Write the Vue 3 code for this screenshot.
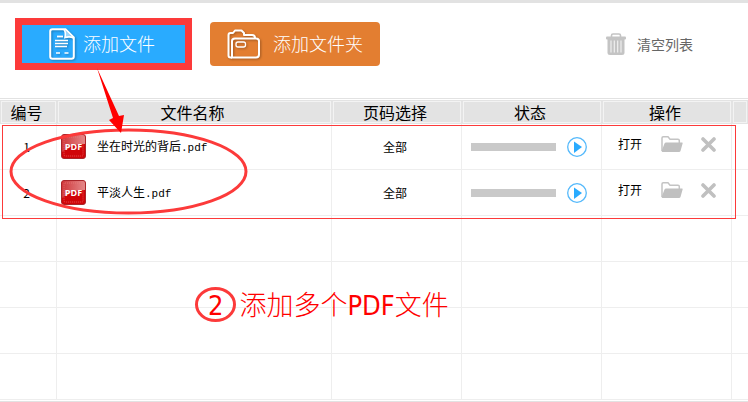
<script setup>
import { ref, computed } from 'vue'

// the grid always shows this many rows, empty ones included
const MIN_ROWS = 6

const files = ref([
  { id: 1, name: '坐在时光的背后', ext: '.pdf', pages: '全部' },
  { id: 2, name: '平淡人生', ext: '.pdf', pages: '全部' },
])
const blanks = computed(() => Math.max(0, MIN_ROWS - files.value.length))

function remove(id) {
  files.value = files.value.filter((f) => f.id !== id)
}
</script>

<template>
  <div class="page">
    <header class="toolbar">
      <button class="btn btn-file" type="button">
        <svg class="btn-icon file-icon" viewBox="0 0 26 32" aria-hidden="true">
          <path d="M3.500 1.200H16.500L24.800 9.500V28.500Q24.800 30.800 22.500 30.800H3.500Q1.200 30.800 1.200 28.500V3.500Q1.200 1.200 3.500 1.200Z" fill="none" stroke="#fff" stroke-width="2" />
          <path d="M15 1.500Q17 4 16 9.500Q21 8 24.500 10" fill="#9dd7fb" stroke="#fff" stroke-width="1.600" />
          <path d="M8 8.500H14" stroke="#fff" stroke-width="1.800" />
          <path d="M6 12.500H19M6 15.500H19M6 18.500H18" stroke="#fff" stroke-width="1.400" />
          <path d="M7 25H11M15.500 25H19.500" stroke="#fff" stroke-width="1.600" />
        </svg>
        <span>添加文件</span>
        <i class="highlight" aria-hidden="true"></i>
      </button>
      <button class="btn btn-folder" type="button">
        <svg class="btn-icon folder-icon" viewBox="0 0 33 30" aria-hidden="true">
          <path d="M5 28.500H3.500Q1.500 28.500 1.500 26.500V6Q1.500 4 3.500 4H6L8 1.500H14.500L17 4V6H25Q28 6 28 9" fill="none" stroke="#fff" stroke-width="2" stroke-linejoin="round" />
          <path d="M5 28.500V12Q5 9.500 8 9.500H29Q32 9.500 32 12V25.500Q32 28.500 29 28.500Z" fill="none" stroke="#fff" stroke-width="2" />
          <rect x="9" y="13" width="9.500" height="5" rx="2" fill="none" stroke="#fff" stroke-width="1.300" />
        </svg>
        <span>添加文件夹</span>
      </button>
      <button class="clear" type="button" @click="files = []">
        <svg class="trash" viewBox="0 0 20 22" aria-hidden="true">
          <path d="M5.500 4V2.500Q5.500 1 7 1H13Q14.500 1 14.500 2.500V4" fill="none" stroke="#c4c4c4" stroke-width="1.600" />
          <rect x="0" y="3.500" width="20" height="3" rx="1" fill="#c4c4c4" />
          <path d="M1.500 6H18.500V19.500Q18.500 22 16 22H4Q1.500 22 1.500 19.500Z" fill="#c4c4c4" />
          <path d="M5 7.500V19.500M8.300 7.500V19.500M11.700 7.500V19.500M15 7.500V19.500" stroke="#f2f2f2" stroke-width="1.100" />
        </svg>
        <span>清空列表</span>
      </button>
    </header>

    <main class="panel">
      <table class="list">
        <colgroup>
          <col class="c-no"><col><col class="c-pages"><col class="c-state"><col class="c-ops"><col class="c-end">
        </colgroup>
        <thead>
          <tr>
            <th scope="col">编号</th>
            <th scope="col">文件名称</th>
            <th scope="col">页码选择</th>
            <th scope="col">状态</th>
            <th scope="col">操作</th>
            <th></th>
          </tr>
        </thead>
        <tbody>
          <tr v-for="(f, i) in files" :key="f.id">
            <td class="mid">{{ i + 1 }}</td>
            <td>
              <div class="name">
                <svg class="pdf" viewBox="0 0 25 25" aria-hidden="true">
                  <defs>
                    <linearGradient :id="'shine' + f.id" x1="0" y1="0" x2="1" y2="0">
                      <stop offset="0" stop-color="#cf4a4c" />
                      <stop offset="1" stop-color="#eab4b4" />
                    </linearGradient>
                  </defs>
                  <rect x="0.500" y="0.500" width="24" height="24" rx="2.500" fill="#d00408" stroke="#a8262a" />
                  <path d="M1 3Q1 1 3 1H22Q24 1 24 3V10Q12 9 1 18Z" :fill="`url(#shine${f.id})`" opacity="0.750" />
                  <rect x="3" y="3" width="19" height="19" rx="1" fill="none" stroke="#ee8585" stroke-width="0.600" stroke-dasharray="1 1" />
                  <text x="12.500" y="16" text-anchor="middle" class="pdf-text">PDF</text>
                </svg>
                <span>{{ f.name }}<span class="ext">{{ f.ext }}</span></span>
              </div>
            </td>
            <td class="mid">{{ f.pages }}</td>
            <td>
              <div class="state">
                <div class="bar" role="progressbar" aria-label="转换进度" aria-valuenow="0"></div>
                <button class="icon-btn" type="button" aria-label="开始">
                  <svg class="play" viewBox="0 0 20 20" aria-hidden="true">
                    <circle cx="10" cy="10" r="9.300" fill="#fff" stroke="#55b9fb" stroke-width="1.300" />
                    <path d="M7 4.500L15 10L7 16Z" fill="#29abff" />
                  </svg>
                </button>
              </div>
            </td>
            <td>
              <div class="ops">
                <button class="open" type="button">打开</button>
                <button class="icon-btn folder-btn" type="button" aria-label="打开文件夹">
                  <svg class="folder" viewBox="0 0 22 16" aria-hidden="true">
                    <path d="M1 15V2Q1 0.800 2.200 0.800H7L9 3.200H17Q18.300 3.200 18.300 4.500V7" fill="none" stroke="#c4c4c4" stroke-width="1.500" />
                    <path d="M5 6.500H21Q22 6.500 21.600 7.500L19.500 15Q19.200 16 18 16H1.500Q0.500 16 0.800 14.500L3.500 7.500Q4 6.500 5 6.500Z" fill="#c0c0c0" />
                  </svg>
                </button>
                <button class="icon-btn" type="button" aria-label="移除" @click="remove(f.id)">
                  <svg class="cross" viewBox="0 0 15 15" aria-hidden="true">
                    <path d="M2 2L13 13M13 2L2 13" stroke="#c0c0c0" stroke-width="3.600" stroke-linecap="round" />
                  </svg>
                </button>
              </div>
            </td>
            <td></td>
          </tr>
          <tr v-for="n in blanks" :key="'blank' + n">
            <td v-for="c in 6" :key="c"></td>
          </tr>
        </tbody>
      </table>
      <div class="frame" aria-hidden="true"></div>
    </main>

    <!-- red guide marks drawn over the window -->
    <svg class="marks" aria-hidden="true">
      <ellipse cx="128.500" cy="171.500" rx="117.500" ry="41.500" />
      <ellipse cx="215.500" cy="304.500" rx="19" ry="16" />
      <path class="arrow" d="M97 68L119 116L124 115L121 133L109 120L113 118Z" />
    </svg>
    <p class="step"><span class="num">2</span><span>添加多个PDF文件</span></p>
  </div>
</template>

<style>
body {
  margin: 0;
  background: #fff;
}
</style>

<style scoped>
.page {
  position: relative;
  border-top: 3px solid #e2e2e2;
  font-family: "Noto Sans CJK SC", sans-serif;
  font-size: 12px;
  color: #000;
}
button {
  padding: 0;
  border: 0;
  background: none;
  font: inherit;
  color: inherit;
  cursor: pointer;
}
svg { display: block; }

/* toolbar */
.toolbar {
  display: flex;
  align-items: center;
  gap: 22px;
  height: 82px;
  padding: 0 55px 13px 18px;
}
.btn {
  position: relative;
  display: flex;
  align-items: center;
  width: 170px;
  height: 44px;
  border-radius: 4px;
  font-size: 18px;
  line-height: 24px;
  color: #fff;
  font-weight: 300;
}
.btn span { padding-bottom: 2px; }
.btn-file { background: #29abff; padding-left: 31px; gap: 8px; }
.btn-folder { background: #e37e31; padding-left: 17px; gap: 13px; }
.btn-icon { filter: drop-shadow(1px 1px 1px rgba(0, 0, 0, 0.3)); }
.file-icon { width: 26px; height: 32px; }
.folder-icon { width: 33px; height: 30px; }
.highlight {
  position: absolute;
  inset: -4px -4px -4px -3px;
  border: 7px solid #fc3a3a;
}
.clear {
  display: flex;
  align-items: center;
  gap: 11px;
  margin-left: auto;
  font-size: 14px;
  line-height: 20px;
  color: #666;
}
.trash { width: 20px; height: 22px; }

/* list */
.panel {
  position: relative;
  padding-top: 1px;
  border-top: 1px solid #e2e2e2;
  border-bottom: 1px solid #e2e2e2;
  padding-bottom: 1px;
}
.list {
  width: 100%;
  table-layout: fixed;
  border-collapse: separate;
  border-spacing: 0;
}
.c-no { width: 57px; }
.c-pages { width: 130px; }
.c-state { width: 140px; }
.c-ops { width: 130px; }
.c-end { width: 16px; }
th {
  box-sizing: border-box;
  height: 24px;
  padding: 0 4px 0 0;
  border: 1px solid #e3e3e3;
  background: #e3e3e3;
  box-shadow: inset 0 0 0 1px #f3f3f3;
  font-size: 16px;
  line-height: 20px;
  font-weight: 400;
}
td {
  box-sizing: border-box;
  height: 46px;
  padding: 0;
  border-right: 1px solid #eee;
  border-bottom: 1px solid #eee;
  line-height: 16px;
}
td:last-child { border-right: 0; }
.mid { padding-right: 3px; text-align: center; }
.name {
  display: flex;
  align-items: center;
  gap: 11px;
  padding-left: 4px;
}
.pdf { width: 25px; height: 25px; }
.pdf-text {
  font-family: "Open Sans", sans-serif;
  font-size: 9px;
  font-weight: 700;
  fill: #fff;
}
.ext { font-family: "Liberation Mono", monospace; font-size: 11px; }
.state {
  display: flex;
  align-items: center;
  gap: 11px;
  padding-left: 9px;
}
.bar { width: 85px; height: 8px; background: #c9c9c9; }
.play { width: 20px; height: 20px; }
.ops {
  display: flex;
  align-items: center;
  padding: 0 0 5px 16px;
}
.folder-btn { margin: 0 18px 0 19px; }
.folder { width: 22px; height: 16px; }
.cross { width: 15px; height: 15px; }

/* guide marks */
.frame {
  position: absolute;
  top: 26px;
  left: 2px;
  right: 12px;
  height: 92px;
  border: 1px solid #fc3a3a;
  pointer-events: none;
}
.marks {
  position: absolute;
  top: -3px;
  left: 0;
  width: 100%;
  height: 100%;
  pointer-events: none;
}
.marks ellipse { fill: none; stroke: #fc3a3a; stroke-width: 3; }
.marks .arrow { fill: #f00; }
.step {
  position: absolute;
  top: 285px;
  left: 208px;
  display: flex;
  gap: 16px;
  margin: 0;
  font-family: "DejaVu Sans Condensed", "Noto Sans CJK SC", sans-serif;
  font-size: 27px;
  line-height: 36px;
  font-weight: 300;
  color: #f00;
  pointer-events: none;
}
</style>
